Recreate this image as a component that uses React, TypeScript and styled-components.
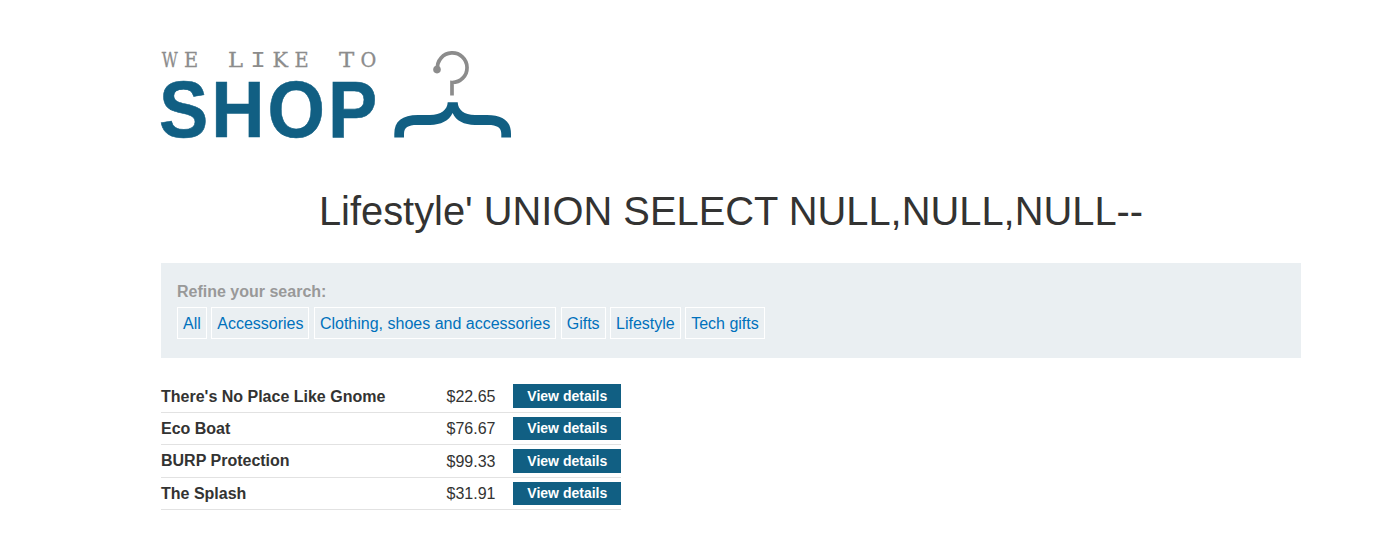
import React from "react";
import styled, { createGlobalStyle } from "styled-components";

const GlobalStyle = createGlobalStyle`
  *, *::before, *::after { box-sizing: border-box; }
  body {
    margin: 0;
    background: #fff;
    color: #333332;
    font-family: "Liberation Sans", Arial, sans-serif;
    font-size: 16px;
  }
`;

const Page = styled.main`
  width: 1140px;
  margin-left: 161px;
  padding-top: 50px;
`;

const Logo = styled.svg`
  display: block;
  width: 352px;
  height: 90px;
  overflow: visible;
`;

const Title = styled.h1`
  margin: 48px 0 0;
  height: 46px;
  line-height: 46px;
  font-size: 39.86px;
  font-weight: 400;
  text-align: center;
`;

const Filters = styled.section`
  margin-top: 29px;
  height: 95px;
  padding: 19px 16px 0;
  background: #eaeff2;
`;

const FilterLabel = styled.div`
  height: 25px;
  line-height: 20px;
  font-weight: 700;
  color: #999;
`;

const FilterList = styled.nav`
  display: flex;
  gap: 4.45px;
`;

const FilterLink = styled.a`
  height: 32px;
  padding: 0 5px;
  border: 1px solid #fff;
  line-height: 31px;
  color: #0071bc;
  text-decoration: none;
  white-space: nowrap;
`;

const Products = styled.section`
  width: 460px;
  margin-top: 22.4px;
`;

const Row = styled.article`
  display: grid;
  grid-template-columns: 285.5px 66.5px 108px;
  align-items: center;
  height: 32.4px;
  border-bottom: 1px solid #e2e2e2;
`;

const Name = styled.h3`
  margin: 0;
  padding-top: 1px;
  font-size: 16px;
  line-height: 18px;
  font-weight: 700;
`;

const Price = styled.span`
  padding-top: 1.6px;
  line-height: 18px;
`;

const DetailsButton = styled.a`
  height: 23.4px;
  padding: 0.4px 0 0 0.6px;
  background: #115f83;
  color: #fff;
  font-size: 14px;
  font-weight: 700;
  line-height: 23.4px;
  text-align: center;
  text-decoration: none;
`;

const categories = ["All", "Accessories", "Clothing, shoes and accessories", "Gifts", "Lifestyle", "Tech gifts"];

const products = [
  { name: "There's No Place Like Gnome", price: "$22.65" },
  { name: "Eco Boat", price: "$76.67" },
  { name: "BURP Protection", price: "$99.33" },
  { name: "The Splash", price: "$31.91" },
];

// Each letter of the tagline with its left edge and set width.
const tagline: [string, number, number][] = [
  ["W", 0.7, 16], ["E", 23, 14.2], ["L", 67, 15], ["I", 89.3, 15.6], ["K", 111.5, 15.5],
  ["E", 133.5, 14.2], ["T", 178, 15.3], ["O", 199.4, 15.8],
];

function ShopLogo() {
  return (
    <Logo viewBox="0 0 352 90" role="img">
      <g fill="#8c8c8c" stroke="#8c8c8c" strokeWidth="0.3" fontFamily="'DejaVu Serif', serif" fontSize="20.6">
        {tagline.map(([letter, x, width]) => (
          <text
            key={x}
            x={x}
            y="16.8"
            fontFamily={letter === "I" ? "'Liberation Mono', monospace" : undefined}
            fontSize={letter === "I" ? 22.5 : undefined}
            strokeWidth={letter === "I" ? 0 : undefined}
            textLength={width}
            lengthAdjust="spacingAndGlyphs"
          >
            {letter}
          </text>
        ))}
      </g>
      <text
        transform="scale(0.93 1)"
        x="-2.1 54 114.4 179.6"
        y="87.4"
        fill="#115f83"
        stroke="#115f83"
        strokeWidth="0.6"
        fontFamily="'Liberation Sans', Arial, sans-serif"
        fontWeight="700"
        fontSize="79.4"
      >
        SHOP
      </text>
      <path d="M276.5 19A14.8 14.8 0 1 1 291 32.5V45.4" fill="none" stroke="#8c8c8c" strokeWidth="3.7" />
      <circle cx="276" cy="19.6" r="3.8" fill="#8c8c8c" />
      <path
        d="M286.7 52.3H296.7C297 60 303 64.8 314 65H326C342 65.2 350 71 350 84V87.4H340.3V84C340.3 77.5 336 75 327 75H314C303 74.6 295 71 291.6 63C288 71 280 74.6 269 75H256C247 75 243 77.5 243 84V87.4H233.3V84C233.3 71 241 65.2 257 65H269C280 64.8 286.4 60 286.7 52.3Z"
        fill="#115f83"
      />
    </Logo>
  );
}

export default function App() {
  return (
    <>
      <GlobalStyle />
      <Page>
        <ShopLogo />
        <Title>Lifestyle' UNION SELECT NULL,NULL,NULL--</Title>
        <Filters>
          <FilterLabel>Refine your search:</FilterLabel>
          <FilterList>
            {categories.map((category) => (
              <FilterLink key={category}>{category}</FilterLink>
            ))}
          </FilterList>
        </Filters>
        <Products>
          {products.map(({ name, price }) => (
            <Row key={name}>
              <Name>{name}</Name>
              <Price>{price}</Price>
              <DetailsButton>View details</DetailsButton>
            </Row>
          ))}
        </Products>
      </Page>
    </>
  );
}
